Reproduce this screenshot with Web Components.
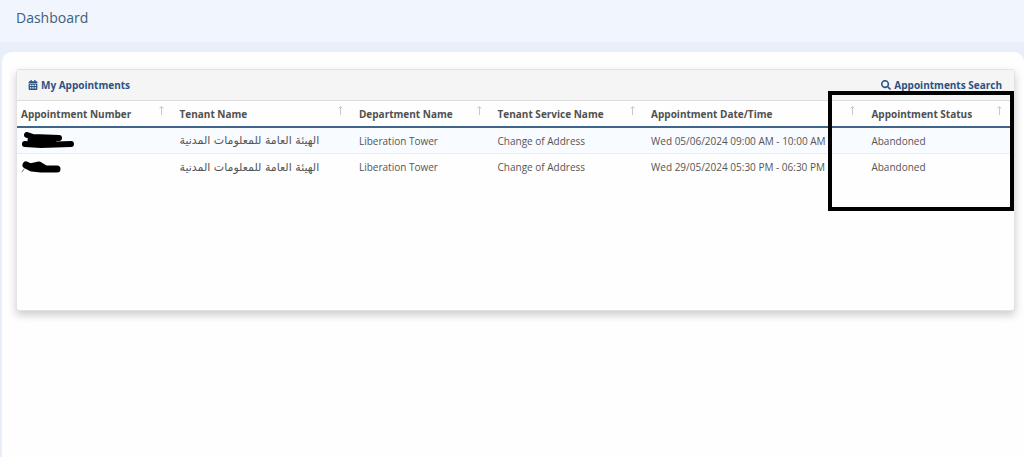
<!DOCTYPE html>
<html lang="en">
<head>
<meta charset="utf-8">
<meta name="viewport" content="width=device-width, initial-scale=1">
<title>Dashboard</title>
<style>
html,body{margin:0;min-height:100%}
body{background:#e9eff9;font-family:"Open Sans","Noto Sans","DejaVu Sans",sans-serif;font-size:10px;color:#555}
</style>
</head>
<body>
<dashboard-page>
  <page-header slot="header">Dashboard</page-header>
  <panel-card>
    <span slot="title">My Appointments</span>
    <span slot="action">Appointments Search</span>
    <appointments-table></appointments-table>
    <highlight-box slot="overlay"></highlight-box>
  </panel-card>
</dashboard-page>
<script>
const define = (name, html, setup) => customElements.define(name, class extends HTMLElement {
  constructor() {
    super();
    const t = document.createElement('template');
    t.innerHTML = html;
    this.attachShadow({mode: 'open'}).append(t.content.cloneNode(true));
    if (setup) setup(this.shadowRoot);
  }
});

define('dashboard-page', `
<style>
:host{display:flex;flex-direction:column;min-height:100vh}
main{flex:1;margin:10px 0 0 2px;padding:17px 9px 24px 14px;background:#fefefe;border-radius:10px 10px 0 0}
</style>
<slot name="header"></slot><main><slot></slot></main>`);

define('page-header', `
<style>
:host{display:block;background:#f1f5fd}
h1{margin:0;padding:8px 16px 14px;font-size:14px;line-height:20px;font-weight:400;color:#3d6079}
</style>
<h1><slot></slot></h1>`);

define('panel-card', `
<style>
:host{display:block;position:relative;min-height:240px;border:1px solid #e3e3e3;border-radius:3px;background:#fefefe;box-shadow:0 4px 9px rgba(0,0,0,.2)}
header{display:flex;justify-content:space-between;align-items:center;height:30px;padding:0 12px 0 11px;background:#f5f5f5;border-bottom:1px solid #dcdcdc}
h2{margin:0;font-size:10px;font-weight:700}
h2,a{display:flex;align-items:center;gap:3px;line-height:16px;color:#2c5282;font-weight:700;text-decoration:none}
svg{width:10px;height:10px;fill:currentColor}
</style>
<header>
<h2><svg viewBox="0 0 448 512" aria-hidden="true"><path d="M96 0h64v64h128V0h64v64h48a48 48 0 0 1 48 48v48H0v-48a48 48 0 0 1 48-48h48zM0 192h448v272a48 48 0 0 1-48 48H48a48 48 0 0 1-48-48zm64 48v64h80v-64zm120 0v64h80v-64zm120 0v64h80v-64zM64 368v64h80v-64zm120 0v64h80v-64zm120 0v64h80v-64z" fill-rule="evenodd"/></svg><slot name="title"></slot></h2>
<a href="#search"><svg viewBox="0 0 512 512" aria-hidden="true"><path d="M505 443 405 343c-4-4-11-7-17-7h-16A208 208 0 1 0 336 372v16c0 6 3 13 7 17l100 100c9 9 25 9 34 0l28-28c9-9 9-25 0-34zM208 336a128 128 0 1 1 0-256 128 128 0 0 1 0 256z"/></svg><slot name="action"></slot></a>
</header>
<slot></slot><slot name="overlay"></slot>`);

define('highlight-box', `
<style>
:host{position:absolute;box-sizing:border-box;top:21px;right:0;width:186px;height:120px;border:4px solid #000;pointer-events:none}
</style>`);

define('redacted-value', `
<style>
:host{display:block;height:18px}
svg{display:block;width:56px;height:18px;fill:none;stroke:#000;stroke-linecap:round;stroke-linejoin:round}
.short,:host([kind=short]) .long{display:none}
:host([kind=short]) .short{display:block}
</style>
<svg class="long" viewBox="0 0 56 18" aria-hidden="true"><path stroke-width="6" d="M6 3 12 5 38 6M4 12 20 13 50 12"/><path stroke-width="5" d="M9 8 24 10 33 9"/></svg>
<svg class="short" viewBox="0 0 56 18" aria-hidden="true"><path stroke-width="7" d="M5 7 11 10 20 11 36 11"/><path stroke-width="5" d="M9 8 18 6 23 9"/><path stroke="#777" stroke-width="1" d="M3 11 1 14"/></svg>`);

define('appointments-table', `
<style>
:host{display:block}
table{width:100%;border-collapse:separate;border-spacing:0;table-layout:fixed;line-height:16px}
th,td{padding:0 4px;text-align:left;white-space:nowrap}
th{height:25px;border-bottom:2px solid #3f658a;color:#505050;font-weight:700}
td{height:26px;color:#555}
tbody tr:first-child td{height:25px;background:#f8fbff;border-bottom:1px solid #e9eef4}
.head{display:flex;justify-content:space-between}
.head svg{width:5px;height:9px;margin-right:8px;fill:none;stroke:#c8c8c8}
bdi{font-family:"DejaVu Sans",sans-serif;font-size:11px}
</style>
<table>
<colgroup><col style="width:15.9%"><col style="width:18%"><col style="width:13.9%"><col style="width:15.4%"><col style="width:22.1%"><col></colgroup>
<thead><tr></tr></thead><tbody></tbody>
</table>`, root => {
  const heads = ['Appointment Number', 'Tenant Name', 'Department Name', 'Tenant Service Name', 'Appointment Date/Time', 'Appointment Status'];
  const rows = [['long', 'Wed 05/06/2024 09:00 AM - 10:00 AM'], ['short', 'Wed 29/05/2024 05:30 PM - 06:30 PM']];
  root.querySelector('thead tr').innerHTML = heads.map(h =>
    `<th scope="col"><div class="head"><span>${h}</span><svg viewBox="0 0 10 18" aria-hidden="true"><path stroke-width="2" d="M5 18V2M1 5l4-4 4 4"/></svg></div></th>`).join('');
  root.querySelector('tbody').innerHTML = rows.map(([kind, time]) =>
    `<tr><td><redacted-value kind="${kind}"></redacted-value></td><td><bdi lang="ar">الهيئة العامة للمعلومات المدنية</bdi></td><td>Liberation Tower</td><td>Change of Address</td><td>${time}</td><td>Abandoned</td></tr>`).join('');
});
</script>
</body>
</html>
